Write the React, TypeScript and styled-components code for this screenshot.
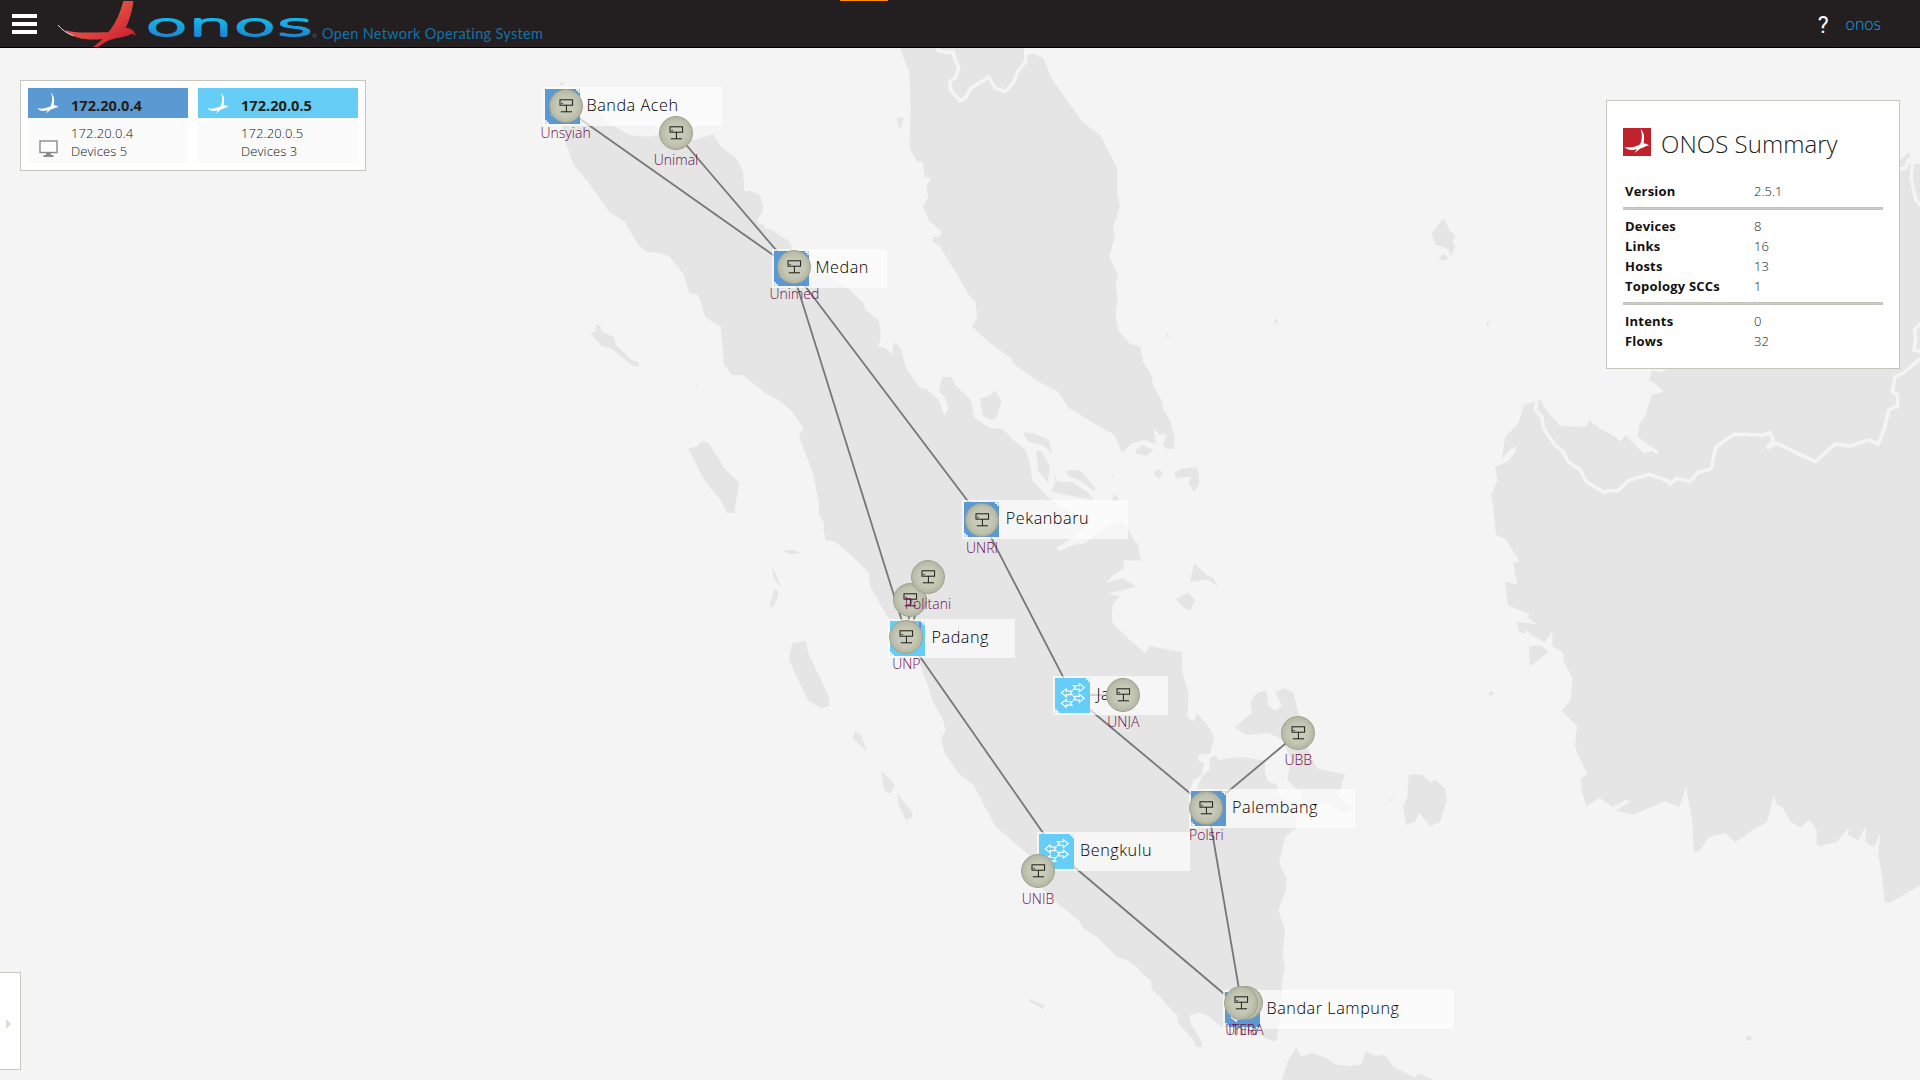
import React from 'react';
import styled, { createGlobalStyle } from 'styled-components';

const GlobalStyle = createGlobalStyle`
  * { box-sizing: border-box; }
  html, body { margin: 0; padding: 0; }
  body {
    width: 1920px;
    height: 1080px;
    overflow: hidden;
    background: #f4f4f4;
    font-family: 'Open Sans', 'Noto Sans', sans-serif;
    color: #222;
  }
`;

/* ---------- masthead ---------- */

const Page = styled.div`
  width: 1920px;
  height: 1080px;
  display: flex;
  flex-direction: column;
  overflow: hidden;
`;

const Masthead = styled.header`
  position: relative;
  height: 48px;
  flex: none;
  display: flex;
  align-items: center;
  padding: 0 39px 0 12px;
  background: #231f20;
  border-bottom: 1px solid #000;
`;

const LoadingTab = styled.div`
  position: absolute;
  left: 840px;
  top: 0;
  width: 48px;
  height: 1px;
  background: #ff8c00;
`;

const Hamburger = styled.div`
  width: 25px;
  height: 20px;
  display: flex;
  flex-direction: column;
  justify-content: space-between;
  margin-top: 1px;
`;

const Bar = styled.span`
  height: 4px;
  background: #fff;
`;

const Logo = styled.svg`
  display: block;
  width: 268px;
  height: 47px;
  margin-left: 17px;
`;

const Tagline = styled.span`
  font-family: Lato, sans-serif;
  font-size: 14.5px;
  letter-spacing: 0.32px;
  line-height: 18px;
  margin-top: 20px;
  color: #1272ab;
  white-space: nowrap;
`;

const Right = styled.div`
  margin-left: auto;
  display: flex;
  align-items: center;
  gap: 17px;
`;

const Help = styled.span`
  font-family: Roboto, sans-serif;
  font-size: 23px;
  line-height: 28px;
  color: #fff;
  margin-top: 4px;
`;

const User = styled.span`
  font-size: 15.9px;
  font-weight: 300;
  line-height: 22px;
  color: #12a2e8;
`;

/* ---------- canvas ---------- */

const Canvas = styled.main`
  position: relative;
  flex: 1;
  overflow: hidden;
`;

const MapLayer = styled.svg`
  position: absolute;
  left: 0;
  top: -48px;
  width: 1920px;
  height: 1080px;
`;

const Nodes = styled.div`
  position: absolute;
  left: 0;
  top: -48px;
`;

const DeviceBox = styled.div<{ $w: number }>`
  position: absolute;
  width: ${(p) => p.$w}px;
  height: 39px;
  padding: 2px;
  display: flex;
  background: rgba(255, 255, 255, 0.66);
`;

const DeviceGlyph = styled.svg<{ $light?: boolean }>`
  flex: none;
  width: 35px;
  height: 35px;
  background: ${(p) => (p.$light ? '#66cdf6' : '#5b99d2')};
`;

const DeviceName = styled.span`
  margin-left: 6.5px;
  font-size: 16.2px;
  font-weight: 300;
  line-height: 33px;
  letter-spacing: 0.55px;
  color: #000;
  white-space: nowrap;
`;

const HostBox = styled.div`
  position: absolute;
  width: 100px;
  margin-left: -50px;
  margin-top: -17px;
  display: flex;
  flex-direction: column;
  align-items: center;
`;

const HostGlyph = styled.svg`
  display: block;
  width: 34px;
  height: 34px;
  border-radius: 50%;
  border: 1px solid #a0a18e;
  background: radial-gradient(circle, #cfd1c2 0%, #c5c7b5 45%, #a3a594 100%);
`;

const HostName = styled.span`
  margin-top: 0.4px;
  font-size: 14px;
  font-weight: 300;
  line-height: 20px;
  color: #6f0f4c;
  white-space: nowrap;
`;

/* ---------- panels ---------- */

const InstancePanel = styled.section`
  position: absolute;
  left: 20px;
  top: 32px;
  width: 346px;
  height: 91px;
  padding: 7px;
  display: flex;
  gap: 10px;
  background: #fff;
  border: 1px solid #c7c7c0;
`;

const Instance = styled.div`
  width: 160px;
  display: flex;
  flex-direction: column;
`;

const InstanceHead = styled.div<{ $color: string }>`
  height: 30px;
  display: flex;
  align-items: center;
  background: ${(p) => p.$color};
  font-size: 14.6px;
  font-weight: 700;
  line-height: 30px;
  padding-top: 3px;
  color: #262015;
`;

const IconCell = styled.div<{ $left: number; $bottom?: number }>`
  width: 43px;
  flex: none;
  display: flex;
  padding-left: ${(p) => p.$left}px;
  padding-bottom: ${(p) => p.$bottom ?? 0}px;
`;

const InstanceBody = styled.div`
  height: 45px;
  display: flex;
  align-items: flex-end;
  background: #fbfbfb;
`;

const InstanceText = styled.div`
  padding-bottom: 3px;
  font-size: 13px;
  font-weight: 300;
  line-height: 18px;
  letter-spacing: 0.1px;
  color: #111;
`;

const SummaryPanel = styled.section`
  position: absolute;
  left: 1606px;
  top: 52px;
  width: 294px;
  height: 269px;
  padding: 27px 16px 0;
  background: #fff;
  border: 1px solid #c7c7c0;
`;

const SummaryHead = styled.div`
  display: flex;
  height: 53px;
`;

const SummaryTitle = styled.h2`
  margin: 1px 0 0 10px;
  font-size: 24px;
  font-weight: 300;
  line-height: 30px;
  letter-spacing: 0.05px;
  color: #222;
  white-space: nowrap;
`;

const Row = styled.div`
  display: flex;
  height: 20px;
  padding-left: 2px;
  font-size: 13px;
  line-height: 20px;
`;

const Key = styled.span`
  width: 129px;
  font-weight: 700;
  letter-spacing: 0.22px;
  color: #111;
`;

const Value = styled.span`
  font-weight: 300;
  color: #222;
`;

const Rule = styled.hr`
  height: 3px;
  margin: 6px 0;
  border: 1px solid #c4c4bd;
  background: #ccc;
`;

const ToolbarTab = styled.aside`
  position: absolute;
  left: 0;
  top: 924px;
  width: 21px;
  height: 98px;
  display: flex;
  align-items: center;
  padding: 5px 0 0 6px;
  background: #fff;
  border: 1px solid #c7c7c0;
  border-left: 0;
`;

const Arrow = styled.span`
  border-left: 5px solid #dcdcd2;
  border-top: 5px solid transparent;
  border-bottom: 5px solid transparent;
`;

/* ---------- geography ---------- */

type Sheet = [number, number, number, number];
const A: Sheet = [540, 40, 2.24, 3];
const B: Sheet = [1100, 40, 1.912, 3];
const C: Sheet = [1100, 500, 1.912, 2.703];
const D: Sheet = [540, 480, 2.24, 2.613];
const E: Sheet = [840, 480, 3, 3];
const F: Sheet = [960, 720, 3, 3];

/** Projects survey-sheet points to canvas points. */
const at = ([ox, oy, sx, sy]: Sheet, pts: string) =>
  pts
    .split(' ')
    .map((p) => {
      const [x, y] = p.split(',').map(Number);
      return `${(ox + x / sx).toFixed(1)},${(oy + y / sy).toFixed(1)}`;
    })
    .join(' ');

const LAND: string[] = [
  // Sumatra
  [
    at(A, '50,180 90,190 135,215 150,245 180,270 200,285 240,290 268,285 345,300 388,282 405,320 440,355 455,395 458,453 470,452 492,465 500,492 497,522 487,538 490,555 500,550 503,565 520,570 560,605 565,628 610,690 650,705 690,745 725,790 728,808 758,840 763,875 762,905 757,918 775,925 788,945 793,905 808,925 820,985 850,1042 867,1048 893,1080 906,1128 915,1105 908,1075 893,1050 902,1010 922,1012 930,1035 965,1080 972,1130 990,1150 1010,1165 1035,1165 1060,1200 1088,1230 1095,1260 1100,1290 1102,1320 1140,1375'),
    at(E, '635,60 665,80 700,100 745,105 750,130 700,172 650,203 658,213 700,195 735,190 765,165 800,140 850,120 880,178 895,195 903,242 850,240 852,265 820,285 797,310 850,295 888,320 850,330 805,340 840,350 820,370 815,400 818,430 870,480 915,520 930,498 990,510 1025,515 1028,580 1045,640 1043,710 1060,725 1072,700 1110,745 1122,775 1110,820 1075,825 1075,840 1090,850 1092,868'),
    at(F, '732,120 725,165 700,180 690,210 712,205 725,170 748,150 750,115 768,105 775,120 800,115 850,112 915,122 915,160 925,185 950,195 955,225 1005,250 1010,325 975,350 957,430 980,475 978,510 955,570 975,630 968,700 975,745 965,790 967,815 965,870 955,930 948,965 915,955 880,930 790,925 760,900 740,885 718,878 690,885 690,905 710,940 725,965 725,982 708,980 700,960 655,910 650,885 625,860 600,830 575,808 573,782 545,760 530,740 500,720 470,712 450,690 410,650 370,625 355,600 300,555 240,500'),
    at(D, '1100,985 1020,905 990,840 972,798 938,768 905,710 898,675 908,655 903,625 880,580 868,535 855,495 848,465 780,360 740,280 735,240 700,200 660,160 640,158 635,130 637,115 625,90'),
    at(A, '625,1390 620,1360 612,1300 600,1260 580,1190 590,1165 565,1115 540,1085 505,1060 455,1005 430,1005 412,975 405,860 370,830 355,765 335,760 320,700 290,650 270,638 240,636 220,615 190,545 155,515 110,430 75,375 55,300 45,220'),
  ].join(' '),
  // Malay peninsula
  [
    at(A, '805,20 828,100 830,200 828,325 845,365 858,365 862,412 876,414 865,440 870,470 858,500 870,540 900,575 895,590 880,590 880,605 895,618 935,705 960,765 975,785 980,830 968,860 1000,900 1055,955 1060,970 1110,1020 1160,1055 1185,1105 1254,1160'),
    at(B, '28,1185 42,1240 60,1210 85,1200 108,1212 102,1165 115,1185 128,1182 120,1215 130,1228 142,1225 142,1190 135,1145 120,1105 120,1090 100,1030 100,1010 82,965 82,950 75,918 58,913 35,870 30,835 33,770 30,730 35,705 18,650 28,590 25,560 38,500 33,460 33,385 0,285'),
    at(A, '1215,245 1148,120 1128,55 1105,42 1090,45 1085,20'),
  ].join(' '),
  // Borneo
  [
    at(B, '810,1095 832,1085 843,1080 850,1105 880,1158 930,1160 935,1140 955,1165 985,1190 995,1205 1005,1185 1040,1240 1055,1232 1065,1245 1068,1235 1045,1210 1028,1190 1032,1150 1042,1130 1055,1065 1078,1055 1060,1030 1050,1020 1055,990 1070,998 1090,985 1300,700 1530,360 1548,335 1547,375 1570,370'),
    at(C, '1570,1040 1508,1090 1500,1085 1495,1010 1488,960 1492,900 1480,938 1463,925 1465,880 1450,920 1430,905 1432,885 1408,925 1378,935 1370,930 1370,890 1355,865 1340,885 1320,870 1305,830 1295,825 1288,798 1280,845 1275,870 1240,900 1215,925 1195,900 1165,910 1145,950 1135,950 1132,860 1120,775 1108,830 1080,815 1045,835 1020,850 995,842 985,840 1015,815 1005,810 980,830 955,805 930,828 922,790 918,755 932,740 918,700 908,665 912,610 883,570 900,540 903,480 887,440 885,412 865,395 865,355 850,385 825,365 815,350 812,362 800,355 798,330 835,335 815,315 822,308 780,285 775,220 798,228 790,170 802,165 775,105 757,95 750,0'),
    at(B, '748,1365 760,1320 755,1280 780,1265 795,1235 795,1220 785,1228 768,1258 775,1190 800,1150'),
  ].join(' '),
  // Java
  at(C, '348,1570 358,1520 375,1480 385,1505 405,1495 435,1510 450,1525 478,1530 500,1525 508,1490 525,1502 545,1500 560,1530 600,1560 612,1550 640,1570'),
  // Bangka and Belitung
  at(C, '300,522 318,515 322,555 335,570 348,555 335,520 352,508 370,520 380,580 400,680 415,725 468,742 455,800 482,832 470,850 430,815 400,835 380,790 358,755 365,700 350,655 340,640 320,630 280,635 258,615 290,575 288,545'),
  at(C, '590,742 615,742 632,765 640,755 660,780 663,810 650,870 632,882 610,845 602,870 585,878 580,830 588,800'),
  // minor islands
  at(A, '48,125 54,128 50,138 44,132'),
  at(A, '800,232 815,235 808,265 802,260'),
  at(A, '125,852 135,858 138,875 165,890 170,915 205,960 220,965 222,980 208,978 160,925 140,920 112,878 125,875'),
  at(A, '343,1025 353,1040 354,1050'),
  at(A, '332,1225 350,1220 365,1202 378,1210 415,1288 446,1328 435,1418 420,1420 405,1380 370,1325'),
  at(A, '985,1075 1005,1068 1020,1052 1034,1085 1022,1135 1010,1140 992,1128'),
  at(A, '1080,1175 1110,1182 1140,1200 1147,1240 1125,1215 1095,1205'),
  at(A, '1112,1230 1125,1235 1142,1280 1138,1330 1115,1290'),
  at(A, '1180,1292 1210,1290 1245,1345 1240,1352 1210,1322 1182,1308'),
  at(A, '1150,1300 1160,1325 1190,1325 1230,1360 1240,1380 1180,1365 1145,1355 1155,1325'),
  at(A, '1335,1230 1350,1215 1374,1230 1357,1248 1335,1240'),
  at(A, '1375,1300 1385,1288 1395,1300 1385,1318'),
  at(A, '1420,1300 1440,1285 1470,1282 1476,1300 1476,1335 1465,1355 1452,1330 1460,1310 1440,1312 1425,1315'),
  at(A, '1404,878 1409,883 1407,894'),
  at(A, '1281,1298 1286,1312 1281,1308'),
  at(B, '28,1360 38,1385 22,1385'),
  at(B, '657,535 668,570 679,588 674,610 679,618 670,652 667,627 642,614 634,580'),
  at(B, '648,650 657,642 666,655 655,663'),
  at(B, '400,778 402,786 400,795'),
  at(B, '336,833 342,846 333,852'),
  at(B, '745,835 742,858 738,853'),
  at(B, '129,873 132,892 128,892'),
  at(C, '747,515 753,522 748,530 742,526'),
  at(C, '180,170 205,205 215,208 227,235 205,215 172,222'),
  at(C, '168,250 182,270 172,300 160,290 145,268'),
  at(C, '820,395 845,393 858,410 822,450'),
  at(C, '552,814 560,803 558,812'),
  at(C, '1240,1447 1247,1455 1240,1463 1234,1457'),
  at(D, '545,185 565,182 585,190 560,195'),
  at(D, '517,222 530,250 541,282 525,260'),
  at(D, '525,285 533,290 532,310 520,335 515,325'),
  at(D, '565,428 595,420 600,450 645,560 649,590 630,597 600,575 557,470'),
  at(D, '705,655 718,665 733,710 700,675'),
  at(D, '765,760 795,795 785,820 770,810'),
  at(D, '800,818 835,870 832,885 822,885 825,900 803,850'),
  at(D, '1098,1357 1130,1372 1128,1383 1095,1362'),
];

const BORDERS: string[] = [
  at(A, '888,30 915,38 925,35 930,60 938,80 932,110 918,125 920,150 940,182 952,175 965,145 1005,112 1020,145 1042,155 1062,125 1070,95 1088,65 1088,20'),
  at(B, '835,1085 832,1110 845,1130 848,1165 870,1215 885,1235 895,1265 918,1290 930,1325 965,1358 972,1352 990,1352 1010,1322 1050,1303 1085,1322 1090,1333 1102,1315 1128,1325 1143,1297 1168,1287 1178,1220 1212,1183 1270,1185 1280,1178 1288,1203 1275,1224 1295,1210 1340,1245 1368,1265 1405,1212 1435,1218 1470,1200 1488,1212 1500,1165 1508,1110 1525,1098 1525,1065 1515,1055 1520,1010 1535,1000 1572,952'),
  at(B, '1572,845 1557,870 1560,895 1556,930 1572,935'),
  at(B, '1553,375 1551,415 1560,480 1572,500'),
  at(B, '1528,388 1540,383 1547,355'),
];

/* ---------- topology ---------- */

const DEVICES = [
  { name: 'Banda Aceh', x: 562.5, y: 106.5, w: 179 },
  { name: 'Medan', x: 791.5, y: 268, w: 115 },
  { name: 'Pekanbaru', x: 981.8, y: 519.6, w: 166 },
  { name: 'Padang', x: 907.5, y: 638.7, w: 127 },
  { name: 'Jambi', x: 1072.5, y: 695.2, w: 115 },
  { name: 'Palembang', x: 1208, y: 808.2, w: 166 },
  { name: 'Bengkulu', x: 1056, y: 851.5, w: 153 },
  { name: 'Bandar Lampung', x: 1242.5, y: 1009.5, w: 231 },
];

const LIGHT = ['Padang', 'Jambi', 'Bengkulu'];

const HOSTS = [
  { name: 'Unsyiah', x: 565.6, y: 105.6 },
  { name: 'Unimal', x: 676, y: 133 },
  { name: 'Unimed', x: 794.4, y: 266.7 },
  { name: 'UNRI', x: 982, y: 520.4 },
  { name: 'UIN', x: 910, y: 600.3 },
  { name: 'Politani', x: 928, y: 576.5 },
  { name: 'UNP', x: 906.4, y: 636.5 },
  { name: 'UNJA', x: 1123.3, y: 695 },
  { name: 'UBB', x: 1298.2, y: 733 },
  { name: 'Polsri', x: 1206.4, y: 808 },
  { name: 'UNIB', x: 1038, y: 871.3 },
  { name: 'ITERA', x: 1246, y: 1002.8 },
  { name: 'Unila', x: 1241.3, y: 1003 },
];

const LINKS = [
  ['Banda Aceh', 'Medan'],
  ['Unimal', 'Medan'],
  ['Medan', 'Padang'],
  ['Medan', 'Pekanbaru'],
  ['Pekanbaru', 'Jambi'],
  ['Jambi', 'Palembang'],
  ['Jambi', 'UNJA'],
  ['Palembang', 'UBB'],
  ['Palembang', 'Bandar Lampung'],
  ['Padang', 'Bengkulu'],
  ['Padang', 'UIN'],
  ['Padang', 'Politani'],
  ['Bengkulu', 'UNIB'],
  ['Bengkulu', 'Bandar Lampung'],
];

const place = (name: string) => [...DEVICES, ...HOSTS].find((n) => n.name === name)!;

const RIGHT_ARROW = 'M-5.2,-1.8 H0.6 V-4 L5.6,0 L0.6,4 V1.8 H-5.2 L-3.4,0 Z';

const SwitchIcon = ({ light }: { light: boolean }) => (
  <DeviceGlyph $light={light} viewBox="-17.5 -17.5 35 35">
    <g fill="none" stroke="#fff" strokeWidth="1.1">
      <path d={RIGHT_ARROW} transform="translate(6.2,-7.9)" />
      <path d={RIGHT_ARROW} transform="translate(-5.6,-2.7) scale(-1,1)" />
      <path d={RIGHT_ARROW} transform="translate(6.2,2.7)" />
      <path d={RIGHT_ARROW} transform="translate(-5.6,7.8) scale(-1,1)" />
      <path d="M13.5,-16.5 H16.5 V-13.5 M-16.5,13.5 V16.5 H-13.5" strokeWidth="1.4" />
    </g>
  </DeviceGlyph>
);

const HostIcon = () => (
  <HostGlyph viewBox="-16 -16 32 32">
    <g fill="none" stroke="#1c1c18" strokeWidth="1">
      <rect x="-6" y="-6.2" width="12.6" height="5.4" />
      <path d="M0.4,-0.8 V5.8 M-5.2,5.8 H6" />
      <path d="M-4.6,-2.6 h1.4" />
    </g>
  </HostGlyph>
);

const BIRD =
  'M250,3 L280,3 C278,30 268,60 257,84 C268,82 283,90 288,107 L276,101 C264,108 246,112 226,115 C205,121 188,130 172,143 L158,143 L188,117 C150,122 98,118 75,91 C110,102 160,96 205,97 C226,72 240,40 250,3 Z';

const SmallBird = ({ size, boxed }: { size: number; boxed?: boolean }) => (
  <svg width={size} height={size} viewBox="0 0 28 28">
    {boxed && <rect width="28" height="28" fill="#c0222b" />}
    <path
      fill="#fff"
      d="M17.5,1 C21,4 21.8,9 20.6,15.5 C23,15.2 25,16 26,18 C24,17.6 23,18.2 21.5,19 C19,20 17,20.4 16,21.5 L11.5,25 L14,21 C9,23 4,22 1.5,19 C6,20.2 12,19 17,16.5 C19.2,12 19.6,6 17.5,1 Z"
    />
  </svg>
);

const Monitor = () => (
  <svg width="19" height="18" viewBox="0 0 19 18">
    <rect x="1" y="1" width="17" height="11.5" fill="#fdfdfd" stroke="#8b8b8b" strokeWidth="1.4" />
    <path d="M7,13 h5 v2 h2.5 v2 h-10 v-2 h2.5 z" fill="#8b8b8b" />
  </svg>
);

const InstanceCard = ({ ip, color, count, current }: { ip: string; color: string; count: number; current?: boolean }) => (
  <Instance>
    <InstanceHead $color={color}>
      <IconCell $left={8} $bottom={2}>
        <SmallBird size={24} />
      </IconCell>
      {ip}
    </InstanceHead>
    <InstanceBody>
      <IconCell $left={11} $bottom={5}>
        {current && <Monitor />}
      </IconCell>
      <InstanceText>
        <div>{ip}</div>
        <div>Devices {count}</div>
      </InstanceText>
    </InstanceBody>
  </Instance>
);

const SummaryRow = ({ k, v }: { k: string; v: string }) => (
  <Row>
    <Key>{k}</Key>
    <Value>{v}</Value>
  </Row>
);

export default function App() {
  return (
    <Page>
      <GlobalStyle />
      <Masthead>
        <LoadingTab />
        <Hamburger>
          <Bar />
          <Bar />
          <Bar />
        </Hamburger>
        <Logo viewBox="54 0 268 47">
          <defs>
            <linearGradient id="red" x1="0" y1="0" x2="1" y2="1">
              <stop offset="0" stopColor="#f0695c" />
              <stop offset="0.5" stopColor="#dc4840" />
              <stop offset="0.85" stopColor="#cf2030" />
            </linearGradient>
            <linearGradient id="blue" gradientUnits="userSpaceOnUse" x1="0" y1="-19" x2="0" y2="2">
              <stop offset="0" stopColor="#12bdf0" />
              <stop offset="1" stopColor="#1f82cc" />
            </linearGradient>
          </defs>
          <g transform="translate(40,0) scale(0.3333)">
            <path d={BIRD} fill="url(#red)" />
            <path d="M54,75 C66,90 82,101 100,107" fill="none" stroke="#ddd" strokeWidth="3" />
          </g>
          <text
            transform="translate(145,35.8) scale(2.2,1)"
            x="0"
            y="0"
            textLength="76.5"
            lengthAdjust="spacingAndGlyphs"
            fontFamily="'DejaVu Sans', sans-serif"
            fontWeight="200"
            fontSize="30.5"
            fill="url(#blue)"
            stroke="url(#blue)"
            strokeWidth="3"
            strokeLinejoin="round"
            vectorEffect="non-scaling-stroke"
          >
            onos
          </text>
          <circle cx="314.5" cy="35.6" r="1.5" fill="none" stroke="#1b78b5" strokeWidth="0.8" />
        </Logo>
        <Tagline>Open Network Operating System</Tagline>
        <Right>
          <Help>?</Help>
          <User>onos</User>
        </Right>
      </Masthead>

      <Canvas>
        <MapLayer viewBox="0 0 1920 1080">
          <g fill="#e5e5e5">
            {LAND.map((points, i) => (
              <polygon key={i} points={points} />
            ))}
          </g>
          <g fill="none" stroke="#f4f4f4" strokeWidth="3.6">
            {BORDERS.map((points, i) => (
              <polyline key={i} points={points} />
            ))}
          </g>
          <g stroke="#777" strokeWidth="1.8">
            {LINKS.map(([from, to]) => {
              const a = place(from);
              const b = place(to);
              return <line key={from + to} x1={a.x} y1={a.y} x2={b.x} y2={b.y} />;
            })}
          </g>
        </MapLayer>

        <Nodes>
          {DEVICES.map((d) => (
            <DeviceBox key={d.name} $w={d.w} style={{ left: d.x - 19.5, top: d.y - 19.5 }}>
              <SwitchIcon light={LIGHT.includes(d.name)} />
              <DeviceName>{d.name}</DeviceName>
            </DeviceBox>
          ))}
          {HOSTS.map((h) => (
            <HostBox key={h.name} style={{ left: h.x, top: h.y }}>
              <HostIcon />
              <HostName>{h.name}</HostName>
            </HostBox>
          ))}
        </Nodes>

        <InstancePanel>
          <InstanceCard ip="172.20.0.4" color="#5b99d2" count={5} current />
          <InstanceCard ip="172.20.0.5" color="#66cdf6" count={3} />
        </InstancePanel>

        <SummaryPanel>
          <SummaryHead>
            <SmallBird size={28} boxed />
            <SummaryTitle>ONOS Summary</SummaryTitle>
          </SummaryHead>
          <SummaryRow k="Version" v="2.5.1" />
          <Rule />
          <SummaryRow k="Devices" v="8" />
          <SummaryRow k="Links" v="16" />
          <SummaryRow k="Hosts" v="13" />
          <SummaryRow k="Topology SCCs" v="1" />
          <Rule />
          <SummaryRow k="Intents" v="0" />
          <SummaryRow k="Flows" v="32" />
        </SummaryPanel>

        <ToolbarTab>
          <Arrow />
        </ToolbarTab>
      </Canvas>
    </Page>
  );
}
